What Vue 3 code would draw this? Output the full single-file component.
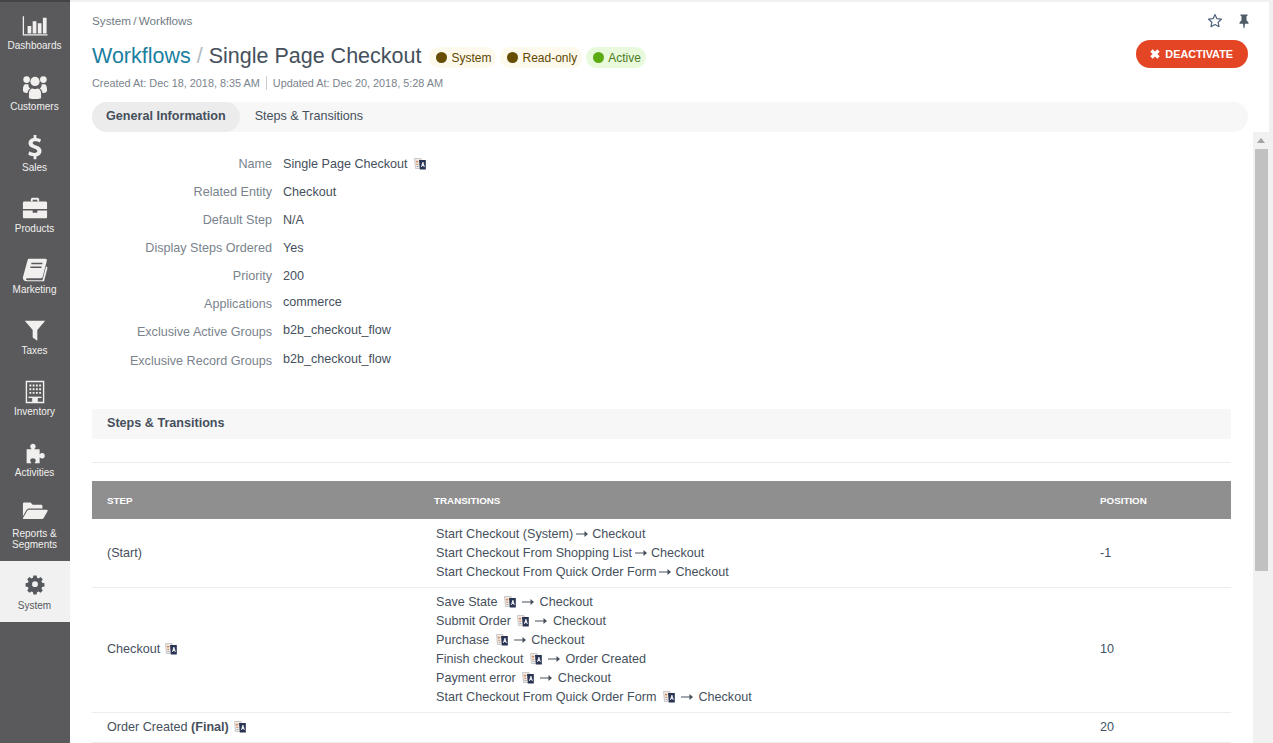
<template>
  <div class="page">
    <aside class="sidebar">
      <a v-for="item in menu" :key="item.label" :class="['menu-item', { active: item.active, tall: item.tall }]">
        <svg class="menu-icon" viewBox="0 0 28 28" v-html="item.icon"></svg>
        <span class="menu-label">{{ item.label }}</span>
      </a>
    </aside>

    <main class="main">
      <header class="head">
        <div class="crumbs-row">
          <div class="crumbs">System / Workflows</div>
          <div class="tools">
            <svg class="tool" viewBox="0 0 16 16"><path d="M8 1.600l1.900 4.100 4.500.5-3.300 3 .9 4.500L8 11.500l-4 2.200.9-4.500-3.300-3 4.500-.5z" fill="none" stroke="#50637a" stroke-width="1.200" stroke-linejoin="round"/></svg>
            <svg class="tool" viewBox="0 0 16 16"><path d="M4.500 1.500h7v1.200l-1 .6v4l2 2.200v1.200H9l-.6 4.600h-.8L7 10.700H3.500V9.500l2-2.200v-4l-1-.6z" fill="#4f5b66"/></svg>
          </div>
        </div>
        <div class="title-row">
          <h1 class="title"><span class="title-link">Workflows</span><span class="title-sep"> / </span>Single Page Checkout</h1>
          <span class="badge warn"><i></i>System</span>
          <span class="badge warn"><i></i>Read-only</span>
          <span class="badge ok"><i></i>Active</span>
          <button class="deactivate">
            <svg viewBox="0 0 10 10"><path d="M2.700.3L5 2.600 7.300.3 9.700 2.700 7.400 5l2.300 2.300-2.400 2.400L5 7.400 2.700 9.700.3 7.300 2.600 5 .3 2.700z" fill="#fff"/></svg>
            DEACTIVATE
          </button>
        </div>
        <div class="dates">
          <span>Created At: Dec 18, 2018, 8:35 AM</span>
          <span class="dates-sep">Updated At: Dec 20, 2018, 5:28 AM</span>
        </div>
        <nav class="tabs">
          <span class="tab current">General Information</span>
          <span class="tab">Steps &amp; Transitions</span>
        </nav>
      </header>

      <section class="body">
        <dl class="info">
          <div v-for="row in info" :key="row.label" class="info-row">
            <dt>{{ row.label }}</dt>
            <dd :class="{ raised: row.raised }">
              {{ row.value }}
              <svg v-if="row.flag" class="flag flag-name" viewBox="0 0 12 12"><use href="#flag-shape" /></svg>
            </dd>
          </div>
        </dl>

        <svg width="0" height="0" class="defs">
          <defs>
            <g id="flag-shape">
              <path d="M.5 .5h6.500l1 10H1.500z" fill="#f2ebe4" stroke="#b9b4b4" stroke-width=".7"/>
              <path d="M5 2h6.800v9.500H5.800z" fill="#2a3554"/>
              <path d="M7 9l1.400-5h1L10.800 9h-1L9.500 7.900H8.200L7.900 9z" fill="#e8e8ee"/>
              <path d="M1.800 3.500h2.600M3 2.500v3M2.300 6.500h2" stroke="#c9835c" stroke-width=".8" fill="none"/>
              <path d="M2.500 8.500h2" stroke="#7d9cc0" stroke-width=".8"/>
            </g>
          </defs>
        </svg>

        <h2 class="section-title">Steps &amp; Transitions</h2>
        <hr class="section-rule" />

        <table class="grid">
          <thead>
            <tr>
              <th class="col-step">STEP</th>
              <th class="col-trans">TRANSITIONS</th>
              <th class="col-pos">POSITION</th>
            </tr>
          </thead>
          <tbody>
            <tr v-for="step in steps" :key="step.name">
              <td class="cell-step">
                {{ step.name }}<b v-if="step.final"> (Final)</b>
                <svg v-if="step.flag" class="flag flag-step" viewBox="0 0 12 12"><use href="#flag-shape" /></svg>
              </td>
              <td class="cell-trans">
                <div v-for="t in step.transitions" :key="t.name" class="transition">
                  {{ t.name }}
                  <svg v-if="t.flag" class="flag flag-trans" viewBox="0 0 12 12"><use href="#flag-shape" /></svg>
                  <svg class="arrow" viewBox="0 0 12 8"><path d="M0 3.400h8.500V1L12 4 8.500 7V4.600H0z" fill="#46505c"/></svg>
                  {{ t.to }}
                </div>
              </td>
              <td class="cell-pos">{{ step.position }}</td>
            </tr>
          </tbody>
        </table>
      </section>

      <div class="scrollbar">
        <span class="scroll-arrow"></span>
        <span class="scroll-thumb"></span>
      </div>
    </main>
  </div>
</template>

<script setup>
const light = '#f1f0ef'

const menu = [
  {
    label: 'Dashboards',
    icon: `<path d="M1.500 3.500v20h26" fill="none" stroke="${light}" stroke-width="1.400"/><path d="M6 14h4v8H6zM11.500 9h4v13h-4zM17 11h4v11h-4zM22.500 5h4v17h-4z" fill="${light}"/>`
  },
  {
    label: 'Customers',
    icon: `<circle cx="14" cy="8" r="5" fill="${light}"/><circle cx="5" cy="6" r="3.600" fill="${light}"/><circle cx="23" cy="6" r="3.600" fill="${light}"/><path d="M1 17c0-4 1-6 3-6h3c-.5 2 .5 3.500 2 4.500-2 1-3 3-3 5-2 0-5 0-5-3.500zM27 17c0-4-1-6-3-6h-3c.5 2-.5 3.500-2 4.500 2 1 3 3 3 5 2 0 5 0 5-3.500z" fill="${light}"/><path d="M7.500 26v-5.500c0-3 2-5 4-5 1.500 1 3.500 1 5 0 2 0 4 2 4 5V26c-3 1.200-10 1.200-13 0z" fill="${light}"/>`
  },
  {
    label: 'Sales',
    icon: `<path d="M12.500 0h3v3.200c2 .2 3.800.8 5 1.500l-1.200 3.500c-1.500-.8-3.300-1.400-5-1.400-1.800 0-2.800.7-2.800 1.800 0 1.200 1.200 1.800 3.800 2.700 4 1.300 5.700 3 5.700 6 0 3-2.100 5.300-5.500 5.800V26h-3v-3.100c-2.300-.2-4.400-.9-5.800-1.900l1.300-3.500c1.600 1 3.600 1.800 5.500 1.800 1.900 0 3-.8 3-2 0-1.300-1.100-2-3.500-2.800-3.700-1.200-6-2.800-6-5.900 0-2.900 2-5 5.500-5.500z" fill="${light}"/>`
  },
  {
    label: 'Products',
    icon: `<path d="M9.500 6V3.800c0-1 .8-1.800 1.800-1.800h5.400c1 0 1.800.8 1.800 1.800V6h-2V4h-5v2z" fill="${light}"/><path d="M2.500 6h23c.9 0 1.500.6 1.500 1.500V14H1V7.500C1 6.600 1.600 6 2.500 6z" fill="${light}"/><path d="M1 15.500h10.500V18h5v-2.500H27v7c0 1-.6 1.500-1.500 1.500h-23c-.9 0-1.500-.5-1.500-1.500z" fill="${light}"/>`
  },
  {
    label: 'Marketing',
    icon: `<path d="M8 2h17c1.500 0 2 1 1.700 2.200L22.500 20.500c-.5 2-1 2.500-3 2.500H6c-1.200 0-1.700.5-1.600 1.200.1.600.7.8 1.600.8h16l4-15 1.500 1.500-3.800 14.500H5c-2.500 0-4-1.500-4-3.500 0-.8.100-1.300.5-2.500L6 3.500C6.300 2.500 7 2 8 2z" fill="${light}"/><path d="M10 7h12M9 11h12" stroke="#5a5a5c" stroke-width="1.500"/>`
  },
  {
    label: 'Taxes',
    icon: `<path d="M3 3h22l-8.500 10v11.500L11.500 21v-8z" fill="${light}"/>`
  },
  {
    label: 'Inventory',
    icon: `<path fill-rule="evenodd" d="M4 2h20v24H4zM5.500 3.500v21h5.500v-4h6v4h5.500v-21z" fill="${light}"/><path d="M8 6h2v2H8zM11.500 6h2v2h-2zM15 6h2v2h-2zM18.500 6h2v2h-2zM8 10h2v2H8zM11.500 10h2v2h-2zM15 10h2v2h-2zM18.500 10h2v2h-2zM8 14h2v2H8zM11.500 14h2v2h-2zM15 14h2v2h-2zM18.500 14h2v2h-2z" fill="${light}"/><path d="M7 19h14v1.500H7z" fill="${light}"/>`
  },
  {
    label: 'Activities',
    icon: `<path d="M5 10h5.500c-1-1-1.600-2-1.600-3.300C8.900 5 10.200 4 11.800 4s2.900 1 2.900 2.700c0 1.300-.6 2.300-1.600 3.300H19v5.500c1-1 1.800-1.400 2.900-1.400 1.700 0 2.600 1.300 2.600 2.900s-.9 2.900-2.600 2.900c-1.100 0-1.900-.4-2.900-1.400V25h-5.500c.8-1 1.300-1.800 1.300-2.800 0-1.700-1.500-2.500-3-2.500s-3 .8-3 2.500c0 1 .5 1.800 1.300 2.800H5z" fill="${light}"/>`
  },
  {
    label: 'Reports & Segments',
    tall: true,
    icon: `<g transform="translate(0 -2.500)"><path d="M1 5.500C1 4.500 1.700 4 2.500 4h6.800l2.200 2.500h9c.8 0 1.500.6 1.500 1.500v2.500H8c-1.500 0-2.500.7-3.200 1.800L1 19z" fill="${light}"/><path d="M7.500 11.800H26.500c1 0 1.500.8 1 1.700l-4 7c-.5.900-1.200 1.500-2.300 1.500H2.200c-1 0-1.400-.7-1-1.500l4.300-7.200c.5-1 1.100-1.500 2-1.500z" fill="${light}"/></g>`
  },
  {
    label: 'System',
    active: true,
    icon: `<g transform="translate(3.500 1.500) scale(.75)"><path fill-rule="evenodd" d="M11.700 1.500h4.600l.7 3.400 2.100.9 2.900-1.900 3.200 3.200-1.900 2.900.9 2.100 3.400.7v4.600l-3.400.7-.9 2.100 1.900 2.900-3.200 3.200-2.900-1.900-2.100.9-.7 3.400h-4.600l-.7-3.400-2.100-.9-2.900 1.900-3.200-3.200 1.900-2.900-.9-2.100-3.400-.7v-4.600l3.400-.7.9-2.100-1.900-2.900 3.200-3.200 2.900 1.900 2.100-.9zM14 9.800a4.200 4.200 0 1 0 0 8.400 4.200 4.200 0 0 0 0-8.400z" fill="#55595d"/></g>`
  }
]

const info = [
  { label: 'Name', value: 'Single Page Checkout', flag: true },
  { label: 'Related Entity', value: 'Checkout' },
  { label: 'Default Step', value: 'N/A' },
  { label: 'Display Steps Ordered', value: 'Yes' },
  { label: 'Priority', value: '200' },
  { label: 'Applications', value: 'commerce', raised: true },
  { label: 'Exclusive Active Groups', value: 'b2b_checkout_flow', raised: true },
  { label: 'Exclusive Record Groups', value: 'b2b_checkout_flow', raised: true }
]

const steps = [
  {
    name: '(Start)',
    position: '-1',
    transitions: [
      { name: 'Start Checkout (System)', to: 'Checkout' },
      { name: 'Start Checkout From Shopping List', to: 'Checkout' },
      { name: 'Start Checkout From Quick Order Form', to: 'Checkout' }
    ]
  },
  {
    name: 'Checkout',
    flag: true,
    position: '10',
    transitions: [
      { name: 'Save State', to: 'Checkout', flag: true },
      { name: 'Submit Order', to: 'Checkout', flag: true },
      { name: 'Purchase', to: 'Checkout', flag: true },
      { name: 'Finish checkout', to: 'Order Created', flag: true },
      { name: 'Payment error', to: 'Checkout', flag: true },
      { name: 'Start Checkout From Quick Order Form', to: 'Checkout', flag: true }
    ]
  },
  {
    name: 'Order Created',
    final: true,
    flag: true,
    position: '20',
    transitions: []
  }
]
</script>

<style>
html,
body {
  margin: 0;
  height: 100%;
  overflow: hidden;
  background: #f1f1f1;
}
</style>

<style scoped>
.page {
  display: flex;
  height: 743px;
  padding-top: 2px;
  box-sizing: border-box;
  font-family: "Liberation Sans", Arial, sans-serif;
  font-size: 12.6px;
  color: #46505c;
}

.sidebar {
  flex: 0 0 70px;
  margin-top: -2px;
  background: #5a5a5c;
  display: flex;
  flex-direction: column;
  position: relative;
}

.sidebar::before {
  content: "";
  position: absolute;
  top: 0;
  left: 0;
  right: 0;
  height: 2px;
  background: #444446;
}

.menu-item {
  height: 61px;
  box-sizing: border-box;
  padding: 13px 1px 0 0;
  display: flex;
  flex-direction: column;
  align-items: center;
  color: #f1f0ef;
  font-size: 10px;
  line-height: 11px;
  text-align: center;
}

.menu-item.tall {
  height: 73px;
}

.menu-item.active {
  padding-top: 12px;
  background: #f1f1f1;
  color: #55595d;
}

.menu-icon {
  width: 26px;
  height: 26px;
  flex: none;
  margin-bottom: 1px;
}

.menu-label {
  width: 60px;
}

.main {
  position: relative;
  flex: 1;
  background: #fff;
  margin-right: 4px;
  overflow: hidden;
}

.head {
  padding: 12px 21px 0 22px;
}

.crumbs-row {
  display: flex;
  justify-content: space-between;
  height: 14px;
  line-height: 14px;
}

.crumbs {
  color: #727b85;
  font-size: 11.7px;
  word-spacing: -1px;
}

.tools {
  display: flex;
  gap: 13px;
  margin: -1px -4px 0 0;
}

.tool {
  width: 16px;
  height: 16px;
}

.title-row {
  display: flex;
  align-items: center;
  height: 33px;
  margin-top: 9px;
}

.title {
  margin: 4px 8px 0 0;
  font-size: 21.5px;
  font-weight: 400;
  line-height: 28px;
  color: #46505c;
}

.title-link {
  color: #1b7f9f;
}

.title-sep {
  color: #b4bbc2;
}

.badge {
  display: inline-flex;
  align-items: center;
  gap: 4px;
  height: 21px;
  padding: 0 5px 0 7px;
  margin: 8px 4px 0 0;
  border-radius: 11px;
  font-size: 12px;
}

.badge i {
  width: 11px;
  height: 11px;
  border-radius: 50%;
}

.badge.warn {
  background: #fdf9ec;
  color: #5f4700;
}

.badge.warn i {
  background: #664d03;
}

.badge.ok {
  background: #e8f9dc;
  color: #4b7c22;
}

.badge.ok i {
  background: #5cab13;
}

.deactivate {
  display: flex;
  align-items: center;
  gap: 5px;
  margin-left: auto;
  height: 28px;
  padding: 0 15px 0 14px;
  border: 0;
  border-radius: 14px;
  background: #e44525;
  color: #fff;
  font: 700 10.85px "Liberation Sans", Arial, sans-serif;
}

.deactivate svg {
  width: 10px;
  height: 10px;
}

.dates {
  display: flex;
  margin-top: 6px;
  height: 14px;
  line-height: 14px;
  font-size: 10.87px;
  color: #7a838d;
}

.dates-sep {
  margin-left: 6px;
  padding-left: 6px;
  border-left: 1px solid #c9cdd1;
}

.tabs {
  display: flex;
  margin-top: 12px;
  height: 30px;
  border-radius: 15px;
  background: #f7f7f7;
}

.tab {
  padding: 0 15px;
  line-height: 28px;
}

.tab.current {
  padding: 0 14px;
  background: #ececec;
  border-radius: 15px;
  font-weight: 700;
}

.body {
  padding: 18px 38px 0 22px;
}

.info {
  margin: 0;
}

.info-row {
  display: flex;
  height: 28px;
  line-height: 28px;
}

.info-row:nth-child(7) {
  height: 29px;
}

.info-row dt {
  width: 180px;
  text-align: right;
  color: #7a838d;
}

.info-row dd {
  margin: 0 0 0 11px;
}

.info-row dd.raised {
  margin-top: -2px;
}

.flag {
  width: 12px;
  height: 12px;
  vertical-align: -2px;
}

.flag-name {
  margin-left: 3px;
}

.flag-step {
  margin-left: 5px;
}

.flag-trans {
  margin: 0 7px 0 3px;
}

.flag-trans + .arrow {
  margin-right: 2px;
}

.defs {
  position: absolute;
}

.section-title {
  margin: 34px 0 0;
  height: 30px;
  padding-left: 15px;
  background: #f7f7f7;
  font-size: 12.6px;
  font-weight: 700;
  line-height: 28px;
  color: #46505c;
}

.section-rule {
  margin: 23px 0 18px;
  border: 0;
  border-top: 1px solid #ebebeb;
}

.grid {
  width: 100%;
  border-collapse: collapse;
  table-layout: fixed;
}

.grid th {
  height: 38px;
  padding: 0;
  box-sizing: border-box;
  background: #8f8f90;
  color: #fff;
  font-size: 9.8px;
  font-weight: 700;
  text-align: left;
}

.col-step {
  width: 342px;
  padding-left: 15px !important;
  box-sizing: border-box;
}

.col-trans {
  width: 666px;
}

.grid td {
  padding: 5px 0;
  border-bottom: 1px solid #ededed;
  line-height: 19px;
}

.grid tbody tr:first-child td {
  padding-top: 6px;
}

.grid tbody tr:nth-child(2) .cell-step,
.grid tbody tr:nth-child(2) .cell-pos {
  padding-bottom: 7px;
}

.cell-trans {
  padding-left: 2px !important;
}

.cell-step {
  padding-left: 15px !important;
}

.transition {
  height: 19px;
}

.arrow {
  width: 12px;
  height: 8px;
  margin: 0 1px 0 -1px;
  vertical-align: 0;
}

.cell-pos {
  color: #3f5266;
}

.scrollbar {
  position: absolute;
  top: 130px;
  left: 1183px;
  width: 16px;
  bottom: 0;
  background: #f1f1f1;
}

.scroll-arrow {
  position: absolute;
  top: 6px;
  left: 4px;
  border: 4px solid transparent;
  border-top: 0;
  border-bottom: 5px solid #a3a3a3;
}

.scroll-thumb {
  position: absolute;
  top: 17px;
  left: 2px;
  width: 13px;
  height: 422px;
  background: #c1c1c1;
}
</style>
